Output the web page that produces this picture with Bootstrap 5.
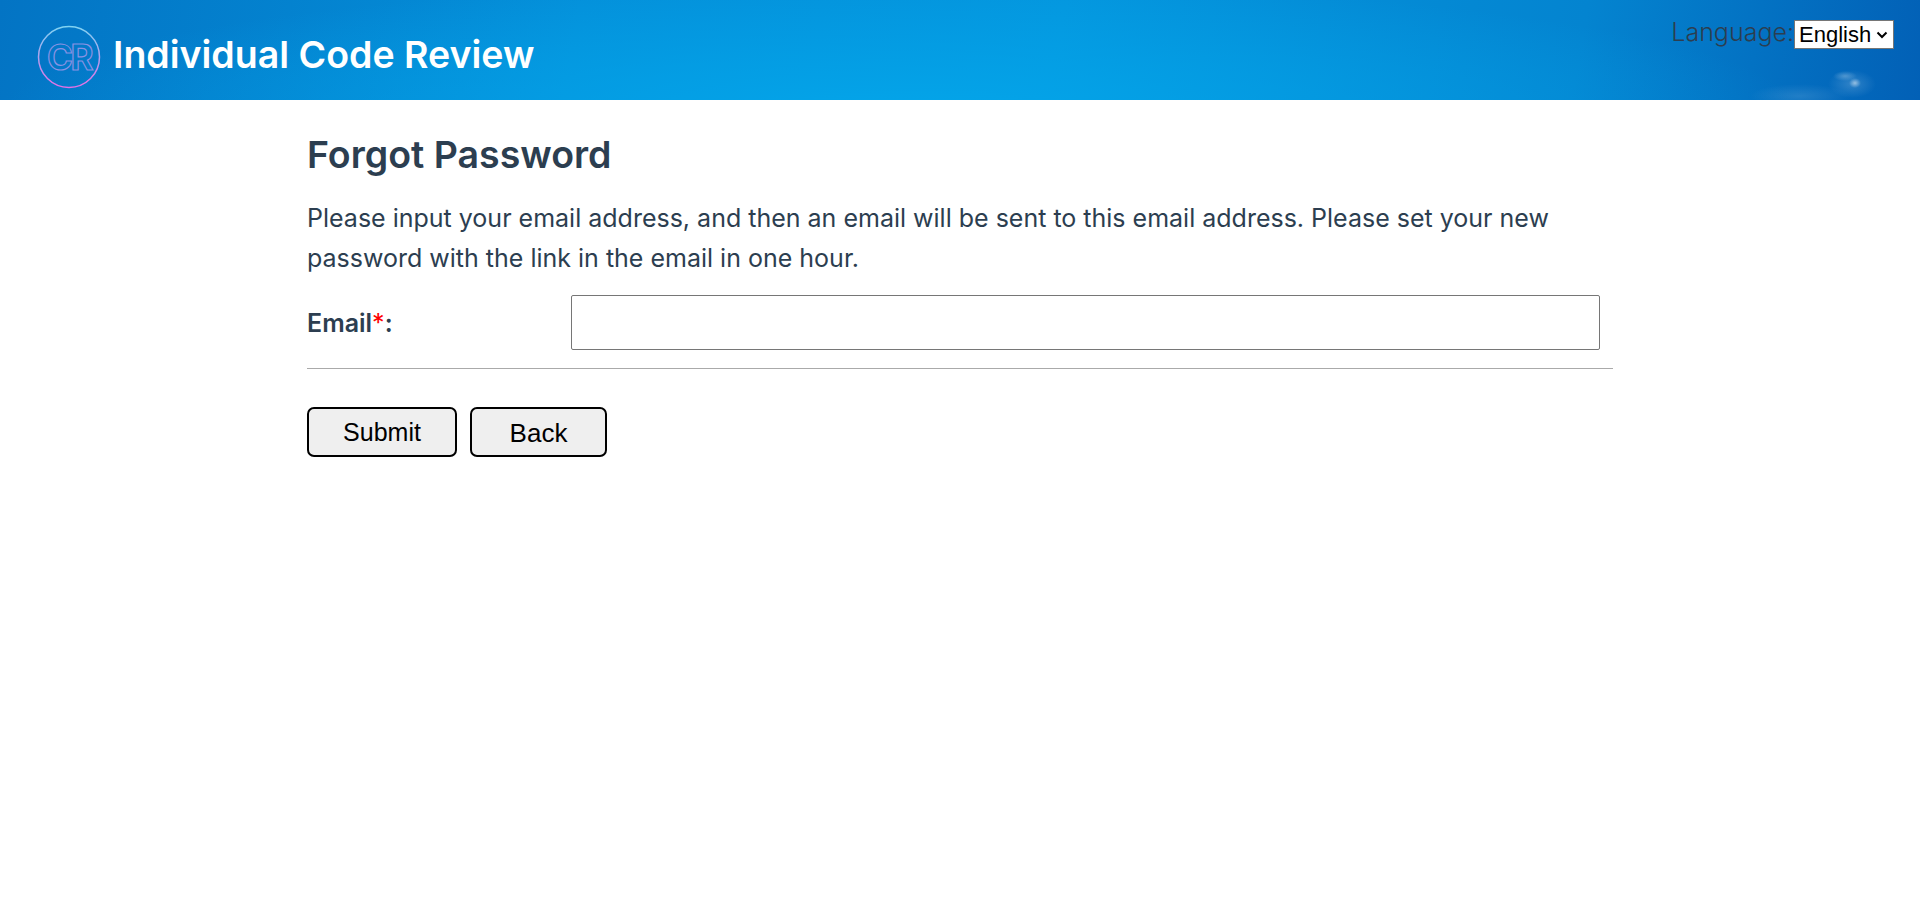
<!DOCTYPE html>
<html lang="en">
<head>
    <meta charset="UTF-8">
    <title>Individual Code Review</title>
    <link rel="stylesheet" href="https://cdn.jsdelivr.net/npm/bootstrap@5.3.0/dist/css/bootstrap.min.css">
    <script src="https://cdn.jsdelivr.net/npm/bootstrap@5.3.0/dist/js/bootstrap.bundle.min.js"></script>
    <style>
        body {
            font-family: Inter, "Liberation Sans", sans-serif;
            color: #2c3e50;
            background: #fff;
        }
        .top-bar {
            height: 100px;
            padding-left: 37px;
            background:
                radial-gradient(ellipse 6px 5px at 1855px 83px, rgba(255,255,255,.5), rgba(255,255,255,0)),
                radial-gradient(ellipse 12px 5px at 1845px 76px, rgba(255,255,255,.25), rgba(255,255,255,0)),
                radial-gradient(ellipse 24px 14px at 1852px 84px, rgba(255,255,255,.18), rgba(255,255,255,0)),
                radial-gradient(ellipse 50px 12px at 1800px 96px, rgba(255,255,255,.12), rgba(255,255,255,0)),
                radial-gradient(ellipse 900px 130px at 900px 110px, rgba(4,166,234,.9), rgba(4,166,234,0)),
                linear-gradient(100deg, #0374c4 0%, #0490da 30%, #0496de 55%, #0484d0 82%, #0260b6 100%);
        }
        .logo-mark { margin-top: 13px; }
        .site-title {
            font-size: 37.5px;
            font-weight: 600;
            color: #fff;
            line-height: 1;
            margin-left: 12px;
            margin-top: 9px;
        }
        .lang-box {
            position: absolute;
            top: 20px;
            right: 26px;
            font-size: 25px;
            font-weight: 300;
            line-height: 1.2;
        }
        .lang-box label { margin-top: -3px; }
        .lang-box select {
            font-family: "Liberation Sans", sans-serif;
            font-size: 22px;
            color: #000;
            height: 29px;
            width: 100px;
            padding: 1px 0 0 4px;
            appearance: none;
            border: 1px solid #767676;
            background: #fff url("data:image/svg+xml,%3Csvg xmlns='http://www.w3.org/2000/svg' width='12' height='8'%3E%3Cpath d='M1.5 1.5 6 6l4.5-4.5' fill='none' stroke='%23000' stroke-width='2'/%3E%3C/svg%3E") no-repeat right 5px center;
        }
        .page-body {
            width: 1306px;
            margin-left: 307px;
        }
        .page-title {
            font-size: 37.5px;
            font-weight: 600;
            line-height: 44px;
            margin: 33px 0 0;
        }
        .intro-text {
            font-size: 25px;
            font-weight: 400;
            line-height: 40px;
            margin: 21px 0 0;
        }
        .field-row {
            margin-top: 17px;
            padding-bottom: 18px;
            border-bottom: 1px solid #aaa;
        }
        .field-label {
            width: 264px;
            font-size: 25px;
            font-weight: 600;
            padding-top: 2px;
        }
        .field-input {
            width: 1029px;
            height: 55px;
            border: 1px solid #767676;
            border-radius: 2px;
        }
        .req-mark { color: #f00; font-weight: 400; }
        .form-buttons { margin-top: 38px; gap: 13px; }
        .form-buttons button {
            font-family: "Liberation Sans", sans-serif;
            height: 50px;
            background: #efefef;
            color: #000;
            border: 2px solid #000;
            border-radius: 7px;
            font-size: 25px;
            padding: 0;
        }
        .btn-submit { width: 150px; padding-top: 2px !important; }
        .btn-back { width: 137px; font-size: 26px !important; padding-top: 3px !important; }
    </style>
</head>
<body>
    <header class="top-bar d-flex align-items-center position-relative">
        <svg width="64" height="64" viewBox="0 0 64 64" class="flex-shrink-0 logo-mark">
            <defs>
                <linearGradient id="ringGrad" x1="0" y1="0" x2="0" y2="1">
                    <stop offset="0" stop-color="#7fd3f2"/>
                    <stop offset="1" stop-color="#e56fe6"/>
                </linearGradient>
            </defs>
            <circle cx="32" cy="32" r="30.5" fill="none" stroke="url(#ringGrad)" stroke-width="1.5"/>
            <text x="32" y="45" text-anchor="middle" font-family="Inter, sans-serif" font-size="35" font-weight="700" letter-spacing="-2.5" fill="none" stroke="#8a92e4" stroke-width="1.2">CR</text>
        </svg>
        <div class="site-title">Individual Code Review</div>
        <div class="lang-box d-flex align-items-start">
            <label for="langSelect">Language:</label>
            <select id="langSelect"><option>English</option></select>
        </div>
    </header>
    <main class="page-body">
        <h1 class="page-title">Forgot Password</h1>
        <p class="intro-text">Please input your email address, and then an email will be sent to this email address. Please set your new password with the link in the email in one hour.</p>
        <div class="field-row d-flex align-items-center">
            <label class="field-label" for="emailInput">Email<span class="req-mark">*</span>:</label>
            <input id="emailInput" type="text" class="field-input">
        </div>
        <div class="form-buttons d-flex">
            <button type="button" class="btn-submit">Submit</button>
            <button type="button" class="btn-back">Back</button>
        </div>
    </main>
</body>
</html>
